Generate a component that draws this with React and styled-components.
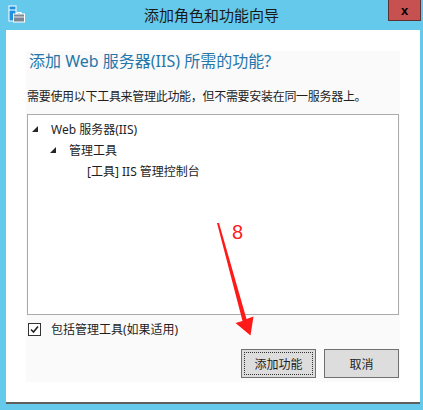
import React from 'react'
import styled, { createGlobalStyle } from 'styled-components'

const GlobalStyle = createGlobalStyle`
  html, body {
    margin: 0;
    padding: 0;
    background: #64c9eb;
  }
  body {
    font-family: "Noto Sans", "Noto Sans CJK SC", sans-serif;
    color: #1e1e1e;
  }
`

const Window = styled.div`
  position: relative;
  width: 423px;
  height: 410px;
  background: #64c9eb;
  overflow: hidden;
`

const TitleBar = styled.div`
  display: grid;
  grid-template-columns: 1fr auto 1fr;
  align-items: start;
  height: 30px;
`

const AppIcon = styled.svg`
  margin: 5px 0 0 7px;
  display: block;
`

const Title = styled.div`
  font-family: "Noto Sans CJK SC", sans-serif;
  font-size: 15px;
  line-height: 30px;
  color: #1a1a1a;
`

const CloseButton = styled.div`
  justify-self: end;
  margin-right: 2px;
  width: 31px;
  height: 20px;
  background: #c75050;
  border: 1px solid #5a3434;
  border-top: none;
  display: flex;
  align-items: center;
  justify-content: center;
  font-family: "Liberation Sans", sans-serif;
  font-weight: bold;
  font-size: 13px;
  color: #000;
`

const Client = styled.div`
  margin: 0 3px 0 6px;
  background: #fff;
  padding: 21px 20px 20px 20px;
  border-bottom: 2px solid #5e5e5e;
`

const Panel = styled.div`
  height: 331px;
  background: #fafafa;
  display: flex;
  flex-direction: column;
  padding: 0 1px;
`

const Heading = styled.h1`
  margin: 0;
  padding-left: 2px;
  font-weight: normal;
  font-size: 16px;
  line-height: 20px;
  color: #2576aa;
`

const Description = styled.p`
  margin: 18px 0 0;
  font-size: 12px;
  line-height: 16px;
  letter-spacing: -0.3px;
`

const TreeBox = styled.div`
  margin-top: 9px;
  height: 196px;
  background: #fff;
  border: 1px solid #ababab;
  padding-top: 3px;
`

const TreeRow = styled.div`
  display: flex;
  align-items: center;
  height: 21px;
  padding-left: ${p => 4 + p.$level * 18}px;
  font-size: 12px;
`

const Expander = styled.svg`
  width: 6px;
  height: 6px;
  margin-right: 13px;
  flex: none;
  visibility: ${p => (p.$hidden ? 'hidden' : 'visible')};
`

const CheckRow = styled.label`
  display: flex;
  align-items: center;
  margin-top: 7px;
  padding-left: 1px;
  height: 14px;
  font-size: 12px;
`

const CheckBox = styled.span`
  width: 11px;
  height: 11px;
  border: 1px solid #333;
  background: #fff;
  margin-right: 10px;
  display: flex;
  align-items: center;
  justify-content: center;
`

const ButtonRow = styled.div`
  display: flex;
  justify-content: flex-end;
  gap: 8px;
  margin-top: 13px;
`

const Button = styled.button`
  position: relative;
  width: 75px;
  height: 29px;
  background: #dddddd;
  border: 1px solid #707070;
  font-family: "Noto Sans CJK SC", sans-serif;
  font-size: 12px;
  color: #1e1e1e;
  padding: 0;

  ${p => p.$focused && `
    &::after {
      content: '';
      position: absolute;
      inset: 2px;
      border: 1px dotted #333;
    }
  `}
`

const Annotation = styled.svg`
  position: absolute;
  left: 0;
  top: 0;
  pointer-events: none;
`

const StepNumber = styled.span`
  position: absolute;
  left: 232px;
  top: 222px;
  font-family: "Liberation Sans", sans-serif;
  font-size: 20px;
  line-height: 20px;
  color: #ff2020;
`

const tree = [
  { level: 0, label: 'Web 服务器(IIS)', open: true },
  { level: 1, label: '管理工具', open: true },
  { level: 2, label: '[工具] IIS 管理控制台' },
]

export default function App() {
  return (
    <>
      <GlobalStyle />
      <Window>
        <TitleBar>
          <AppIcon width="19" height="19" viewBox="0 0 19 19">
            <rect x="2" y="1" width="7" height="15" fill="#1e90e0" stroke="#fff" strokeWidth="1" />
            <line x1="2" y1="5" x2="9" y2="5" stroke="#fff" />
            <path d="M10 7.5 h4 v1.5 M10 7.5 v1.5" fill="none" stroke="#fff" strokeWidth="1.2" />
            <rect x="6.5" y="9" width="11" height="8" fill="#7b8794" stroke="#fff" strokeWidth="1" />
            <line x1="6.5" y1="12" x2="17.5" y2="12" stroke="#fff" strokeWidth="0.8" />
          </AppIcon>
          <Title>添加角色和功能向导</Title>
          <CloseButton>x</CloseButton>
        </TitleBar>

        <Client>
          <Panel>
            <Heading>添加 Web 服务器(IIS) 所需的功能?</Heading>
            <Description>需要使用以下工具来管理此功能，但不需要安装在同一服务器上。</Description>

            <TreeBox>
              {tree.map(item => (
                <TreeRow key={item.label} $level={item.level}>
                  <Expander $hidden={!item.open} viewBox="0 0 6 6">
                    <polygon points="6,0 6,6 0,6" fill="#262626" />
                  </Expander>
                  {item.label}
                </TreeRow>
              ))}
            </TreeBox>

            <CheckRow>
              <CheckBox>
                <svg width="9" height="9" viewBox="0 0 9 9">
                  <path d="M1 4.5 L3.5 7 L8 1.5" fill="none" stroke="#222" strokeWidth="1.6" />
                </svg>
              </CheckBox>
              包括管理工具(如果适用)
            </CheckRow>

            <ButtonRow>
              <Button $focused>添加功能</Button>
              <Button>取消</Button>
            </ButtonRow>
          </Panel>
        </Client>

        <Annotation width="423" height="410" viewBox="0 0 423 410">
          <polygon
            points="217,223 219,223 246.5,319 253.5,316.5 250.5,335.5 235.5,323 242.5,321"
            fill="#ff1a1a"
          />
        </Annotation>
        <StepNumber>8</StepNumber>
      </Window>
    </>
  )
}
